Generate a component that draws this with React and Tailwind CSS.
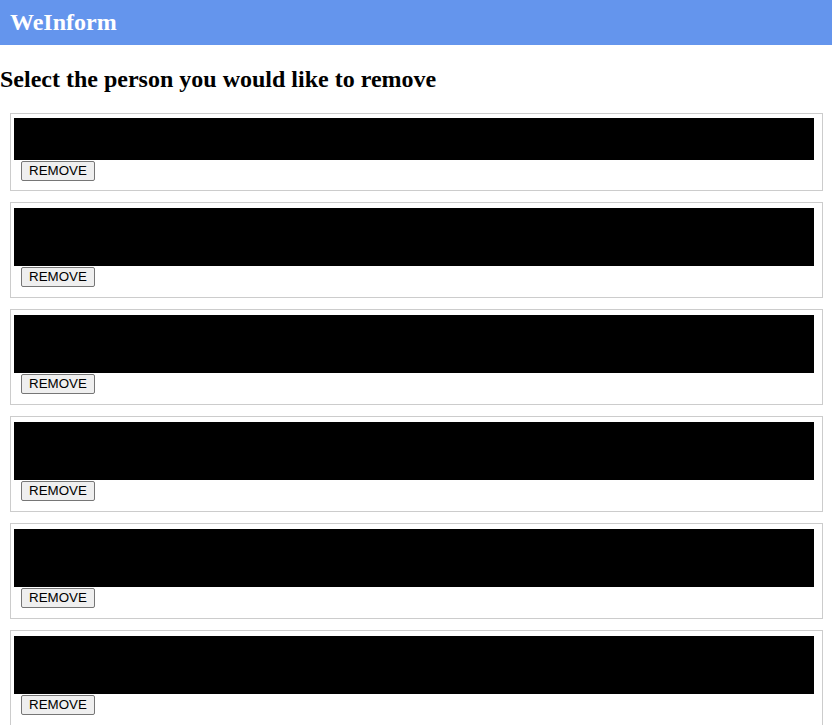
import React from "react";

const heights = [42, 58, 58, 58, 58, 58];

export default function App() {
  return (
    <div className="min-h-[725px] bg-white text-black" style={{ fontFamily: '"Liberation Serif", "Times New Roman", serif' }}>
      <header className="h-[45px] bg-[#6495ed] pl-[10px] flex items-center text-white font-bold text-[24px] leading-[27px]">
        WeInform
      </header>
      <h2 className="mt-[21px] mb-[20px] text-[24px] leading-[27px] font-bold">
        Select the person you would like to remove
      </h2>
      <div className="flex flex-col gap-[11px] pl-[10px] pr-[9px]">
        {heights.map((h, i) => (
          <div key={i} className={`border border-[#cccccc] pl-[3px] ${i === 0 ? "pt-[4px] pb-[9px]" : "pt-[5px] pb-[10px]"}`}>
            <div className={`w-[800px] bg-black ${i === 0 ? "h-[42px]" : "h-[58px]"}`} />
            <button
              className="mt-[1px] ml-[7px] h-[20px] w-[74px] flex items-center justify-center bg-[#efefef] border border-[#767676] rounded-[2px] text-[13.33px] leading-none text-black"
              style={{ fontFamily: '"Liberation Sans", Arial, sans-serif' }}
            >
              REMOVE
            </button>
          </div>
        ))}
      </div>
    </div>
  );
}
